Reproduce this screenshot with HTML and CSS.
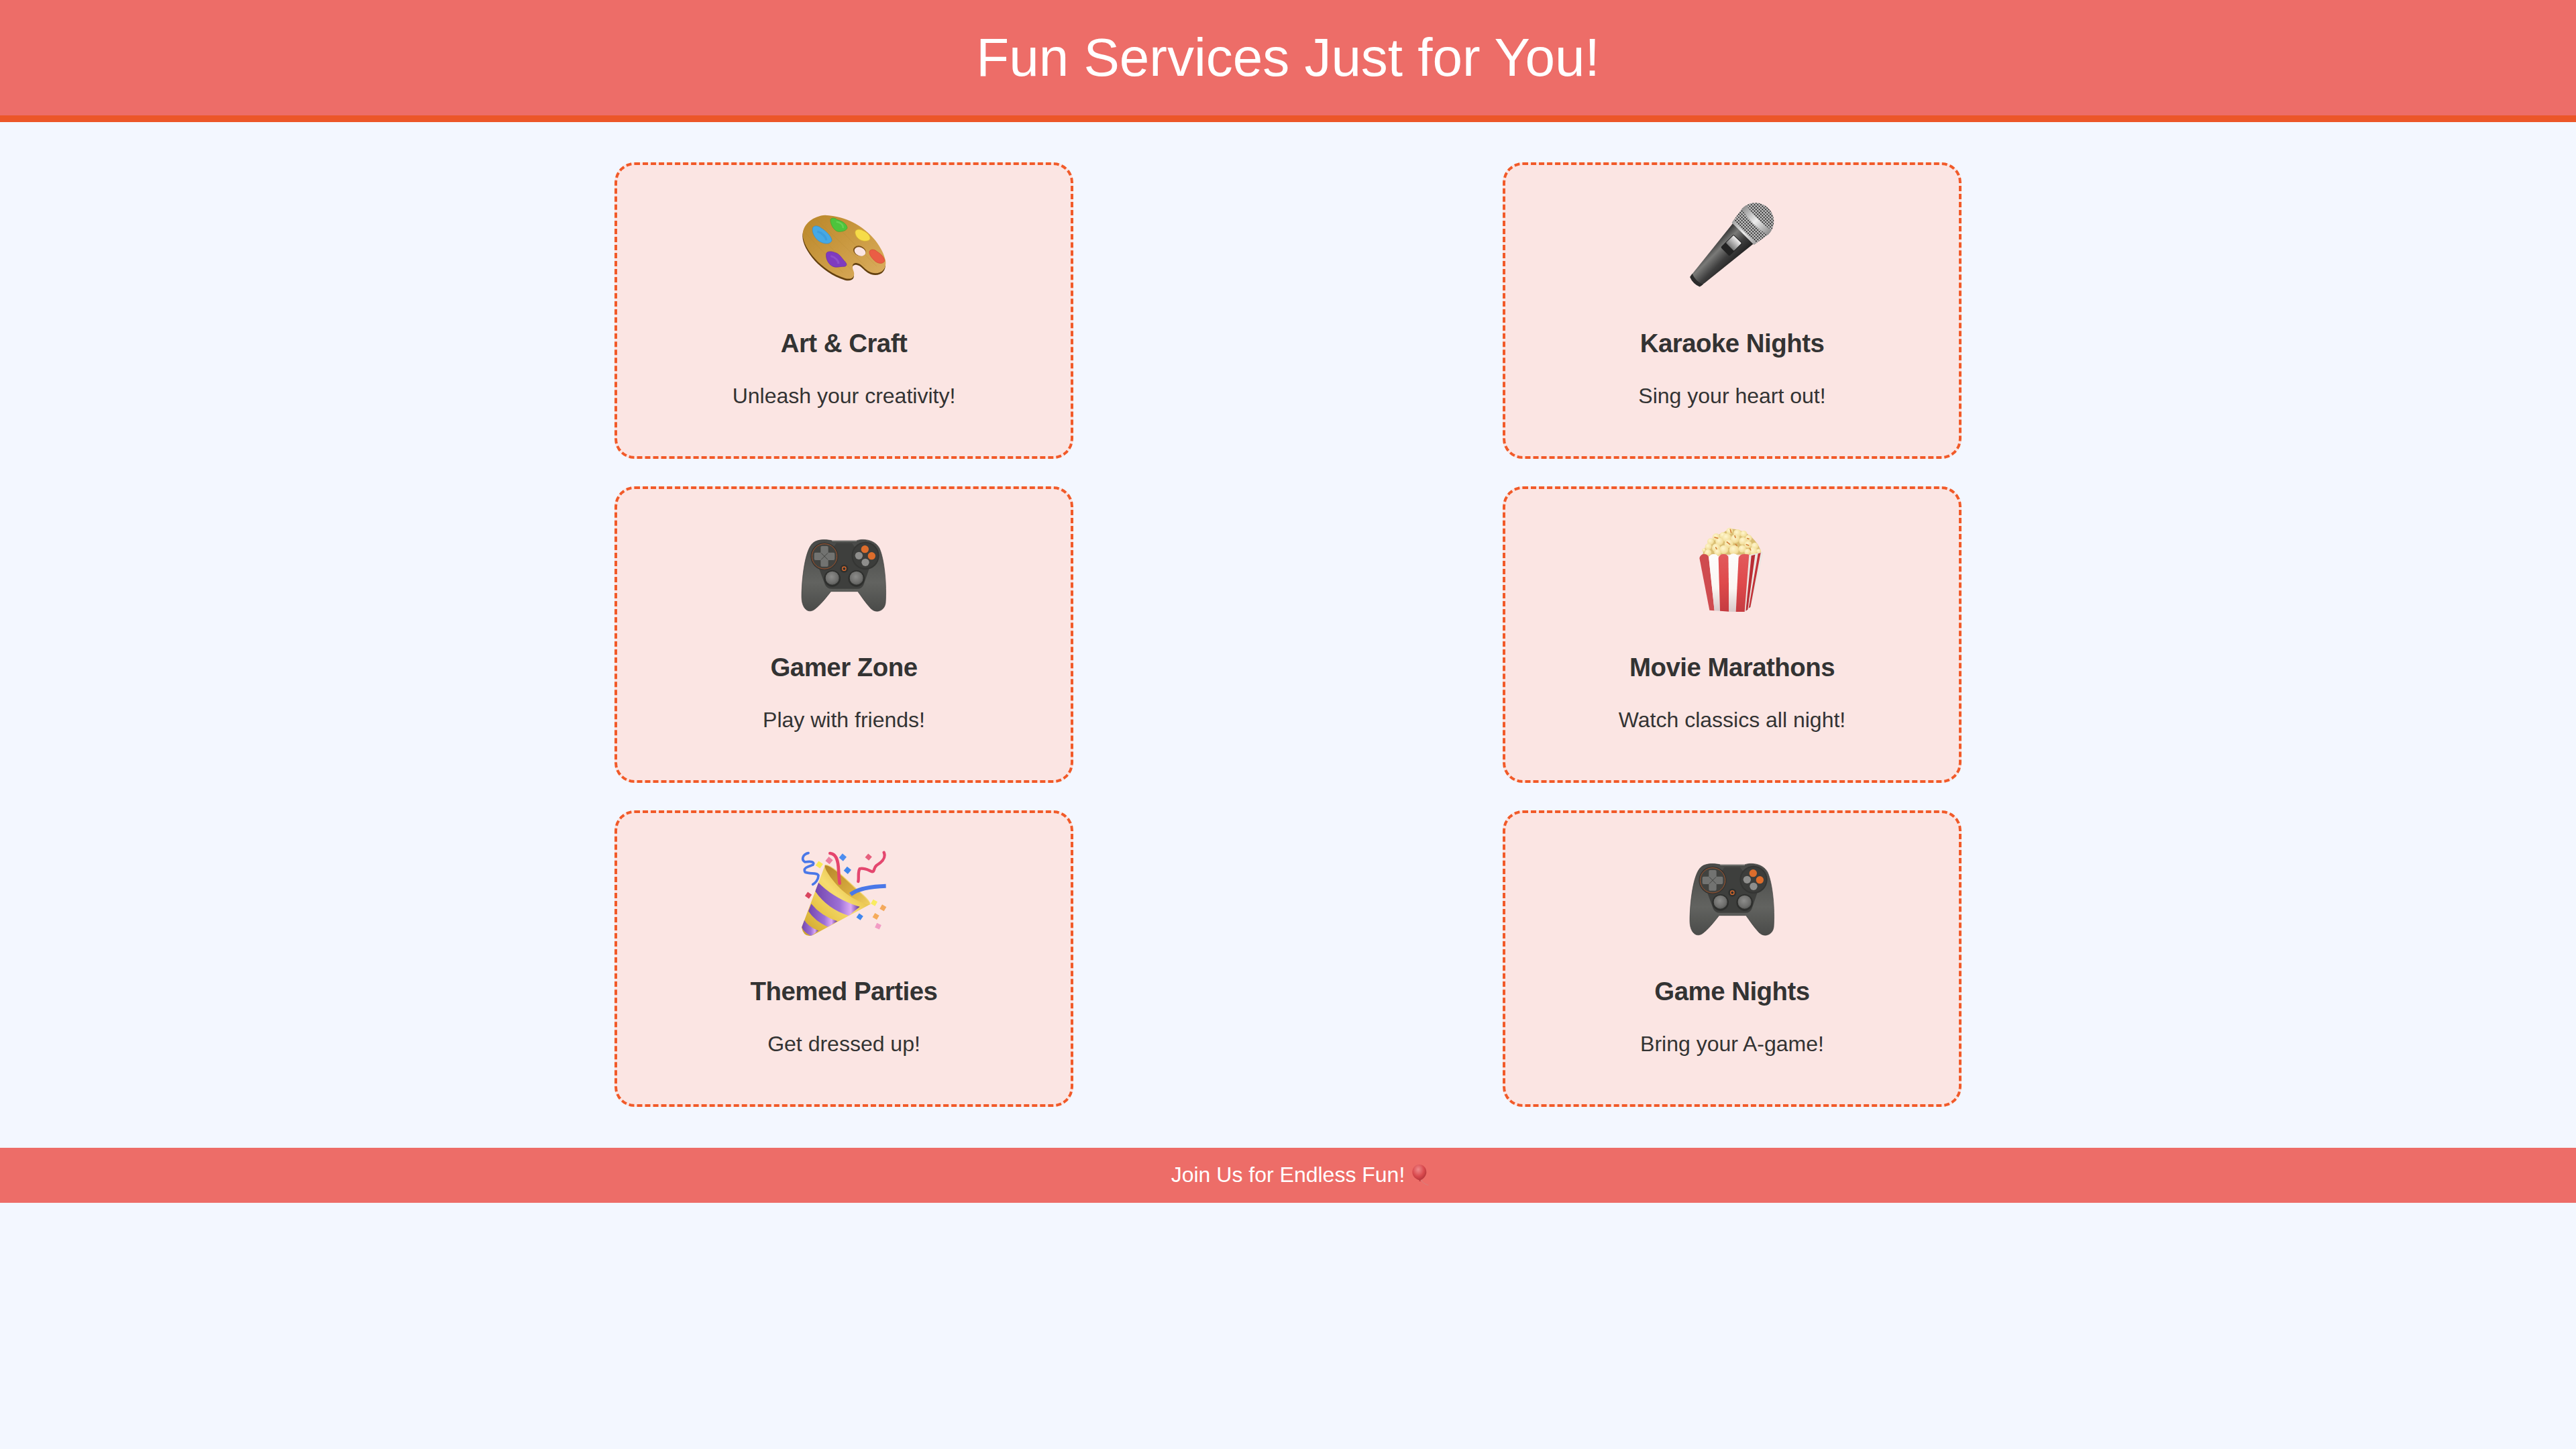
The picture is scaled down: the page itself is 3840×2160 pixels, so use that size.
FILE: index.html
```html
<!DOCTYPE html>
<html lang="en">
<head>
<meta charset="utf-8">
<title>Fun Services Just for You!</title>
<link rel="stylesheet" href="styles.css">
</head>
<body>
<svg class="sprite" aria-hidden="true">
  <defs>
    <linearGradient id="padBody" x1="0" y1="0" x2="0" y2="1">
      <stop offset="0" stop-color="#484947"/><stop offset=".6" stop-color="#626360"/><stop offset="1" stop-color="#4a4b49"/>
    </linearGradient>
    <radialGradient id="padStick" cx=".45" cy=".4" r=".65">
      <stop offset="0" stop-color="#8d8d8b"/><stop offset=".7" stop-color="#6e6e6c"/><stop offset="1" stop-color="#555654"/>
    </radialGradient>
    <symbol id="pad" viewBox="132 30 384 384">
      <path d="M186 103C208 84 250 88 272 93L380 93C405 83 460 86 482 125C506 175 516 295 510 372C505 408 468 420 444 396C420 370 402 342 386 320L266 320C246 346 216 384 190 402C160 420 134 392 135 340C136 260 150 132 186 103Z" fill="url(#padBody)" stroke="#3d3e3c" stroke-width="2"/>
      <path d="M272 95L380 95" stroke="#8f908d" stroke-width="3" stroke-linecap="round" fill="none"/>
      <path d="M212 215L290 104L360 104L438 215L412 290Q404 308 385 308L270 308Q248 308 240 290Z" fill="#3e3f3d"/>
      <circle cx="237" cy="163" r="62" fill="#343533"/>
      <circle cx="237" cy="163" r="56" fill="#41423f" stroke="#b4592b" stroke-width="2.5"/>
      <path d="M220 123Q220 117 226 117L248 117Q254 117 254 123L254 146L277 146Q283 146 283 152L283 174Q283 180 277 180L254 180L254 203Q254 209 248 209L226 209Q220 209 220 203L220 180L197 180Q191 180 191 174L191 152Q191 146 197 146L220 146Z" fill="#727371"/>
      <path d="M222 148L252 178M252 148L222 178" stroke="#3a3b39" stroke-width="2.5"/>
      <circle cx="420" cy="160" r="62" fill="#343533"/>
      <circle cx="420" cy="160" r="56" fill="#3c3d3b"/>
      <circle cx="418" cy="131" r="17" fill="#dd6d2c"/>
      <circle cx="448" cy="161" r="17" fill="#dd6d2c"/>
      <circle cx="391" cy="160" r="17" fill="#8e8e8c"/>
      <circle cx="420" cy="190" r="17" fill="#8e8e8c"/>
      <circle cx="325" cy="218" r="18" fill="#2f302e"/>
      <circle cx="325" cy="218" r="8" fill="none" stroke="#d9682b" stroke-width="4"/>
      <circle cx="272" cy="262" r="37" fill="#2e2f2d"/>
      <circle cx="272" cy="260" r="30" fill="url(#padStick)"/>
      <circle cx="380" cy="262" r="37" fill="#2e2f2d"/>
      <circle cx="380" cy="260" r="30" fill="url(#padStick)"/>
    </symbol>
  </defs>
</svg>

<header class="site-header">
  <h1 class="site-title">Fun Services Just for You!</h1>
</header>

<main class="services">
  <article class="card">
    <svg class="icon" viewBox="132 36 384 384" role="img" aria-label="Artist palette">
      <defs>
        <linearGradient id="wood" x1="0" y1="0" x2="1" y2="1">
          <stop offset="0" stop-color="#b98629"/><stop offset=".45" stop-color="#c9983f"/><stop offset="1" stop-color="#dcae60"/>
        </linearGradient>
        <path id="paletteShape" d="M240 92C190 95 140 130 140 180C142 240 220 340 330 375C360 382 375 368 368 345C360 325 358 306 380 306C410 310 420 350 465 352C500 352 515 325 510 295C495 220 400 100 240 92Z"/>
      </defs>
      <use href="#paletteShape" fill="#63400f" transform="translate(-1 8)"/>
      <use href="#paletteShape" fill="url(#wood)"/>
      <g fill="none" stroke="#a87a28" stroke-width="1.5" opacity=".35">
        <path d="M170 130L360 340M200 110L420 320M255 105L470 320M150 170L320 350"/>
      </g>
      <ellipse cx="394" cy="252" rx="29" ry="22" transform="rotate(22 394 252)" fill="#7a5019"/>
      <ellipse cx="396" cy="255" rx="26" ry="19" transform="rotate(22 396 255)" fill="#fbe5e3"/>
      <path d="M264 112C268 102 286 104 292 112C305 116 335 125 339 148C338 162 312 168 296 165C278 160 262 130 264 112Z" fill="#4dc43c" stroke="#38a52c" stroke-width="2"/>
      <path d="M290 122C308 124 322 135 320 150" stroke="#7fe06c" stroke-width="7" fill="none" opacity=".5"/>
      <path d="M184 150C190 135 212 140 222 150C240 160 268 185 270 205C265 222 240 222 224 214C200 205 180 175 184 150Z" fill="#46a9e4" stroke="#2f8bd0" stroke-width="2"/>
      <path d="M205 165C225 170 245 190 245 205" stroke="#2f87cf" stroke-width="10" fill="none" opacity=".35"/>
      <path d="M375 165C380 152 400 155 410 162C425 168 442 182 441 198C436 210 415 210 400 204C385 198 372 180 375 165Z" fill="#f6dc49" stroke="#d8b72f" stroke-width="2"/>
      <path d="M438 255C444 242 462 245 472 255C490 265 508 285 506 298C500 310 480 310 466 300C452 288 436 270 438 255Z" fill="#ea5d45" stroke="#d2452f" stroke-width="2"/>
      <path d="M246 262C252 252 272 254 284 260C300 262 312 280 325 296C338 308 340 320 325 322C310 320 290 330 272 320C255 312 240 285 246 262Z" fill="#7f3bc0" stroke="#6628a5" stroke-width="2"/>
      <path d="M265 275C285 280 300 295 300 310" stroke="#a068d8" stroke-width="9" fill="none" opacity=".45"/>
    </svg>
    <h3 class="card-title">Art &amp; Craft</h3>
    <p class="card-text">Unleash your creativity!</p>
  </article>

  <article class="card">
    <svg class="icon" viewBox="84 51 384 384" role="img" aria-label="Microphone">
      <defs>
        <linearGradient id="micBody" x1="0" y1="0" x2="1" y2="0">
          <stop offset="0" stop-color="#333"/><stop offset=".3" stop-color="#7a7a78"/><stop offset=".65" stop-color="#3e3e3e"/><stop offset="1" stop-color="#222"/>
        </linearGradient>
        <linearGradient id="micSilver" x1="0" y1="0" x2="1" y2="0">
          <stop offset="0" stop-color="#8d8d8d"/><stop offset=".5" stop-color="#ededed"/><stop offset="1" stop-color="#8a8a8a"/>
        </linearGradient>
        <linearGradient id="micSlide" x1="0" y1="0" x2="0" y2="1">
          <stop offset="0" stop-color="#f0eeee"/><stop offset="1" stop-color="#777"/>
        </linearGradient>
        <pattern id="grille" width="10" height="10" patternUnits="userSpaceOnUse">
          <rect width="10" height="10" fill="#c9c9c9"/><rect x="2" y="2" width="6" height="6" rx="1" fill="#232323"/>
        </pattern>
        <clipPath id="micHead"><path d="M297 135A83 83 0 0 1 463 135L450 214L310 214Z"/></clipPath>
      </defs>
      <g transform="rotate(45 380 135)">
        <path d="M315 210L348 512Q380 526 412 512L445 210Z" fill="url(#micBody)"/>
        <path d="M346 500L349 518Q380 530 411 518L414 500Q380 514 346 500Z" fill="#2b2b2b"/>
        <rect x="352" y="245" width="56" height="82" rx="6" fill="#232323"/>
        <rect x="355" y="248" width="50" height="48" rx="3" fill="url(#micSlide)"/>
        <g clip-path="url(#micHead)">
          <rect x="290" y="45" width="180" height="180" fill="url(#grille)"/>
          <path d="M295 112Q380 128 465 112L465 140Q380 156 295 140Z" fill="url(#micSilver)"/>
          <path d="M290 196Q380 210 470 196L470 225L290 225Z" fill="url(#micSilver)"/>
        </g>
      </g>
    </svg>
    <h3 class="card-title">Karaoke Nights</h3>
    <p class="card-text">Sing your heart out!</p>
  </article>

  <article class="card">
    <svg class="icon" role="img" aria-label="Game controller"><use href="#pad"/></svg>
    <h3 class="card-title">Gamer Zone</h3>
    <p class="card-text">Play with friends!</p>
  </article>

  <article class="card">
    <svg class="icon" viewBox="84 45 384 384" role="img" aria-label="Popcorn">
      <defs>
        <radialGradient id="kernel" cx=".4" cy=".35" r=".7">
          <stop offset="0" stop-color="#fff6cf"/><stop offset=".75" stop-color="#f3df9d"/><stop offset="1" stop-color="#e0c47a"/>
        </radialGradient>
        <linearGradient id="boxRed" x1="0" y1="0" x2="0" y2="1">
          <stop offset="0" stop-color="#e25a5c"/><stop offset=".5" stop-color="#df4a4c"/><stop offset="1" stop-color="#c53b40"/>
        </linearGradient>
        <linearGradient id="boxWhite" x1="0" y1="0" x2="0" y2="1">
          <stop offset="0" stop-color="#fdfdfd"/><stop offset=".6" stop-color="#fbf6f2"/><stop offset="1" stop-color="#d9c9c9"/>
        </linearGradient>
      </defs>
      <path d="M145 170C150 130 190 90 240 70C270 45 300 55 340 75C380 100 405 140 408 170Z" fill="#d9bd72"/>
      <g fill="url(#kernel)">
        <circle cx="265" cy="65" r="15"/><circle cx="300" cy="75" r="18"/><circle cx="328" cy="78" r="15"/>
        <circle cx="235" cy="85" r="15"/><circle cx="205" cy="92" r="17"/><circle cx="350" cy="97" r="15"/>
        <circle cx="252" cy="95" r="20"/><circle cx="290" cy="100" r="20"/><circle cx="180" cy="112" r="15"/>
        <circle cx="325" cy="110" r="18"/><circle cx="220" cy="112" r="18"/><circle cx="262" cy="122" r="20"/>
        <circle cx="348" cy="125" r="17"/><circle cx="378" cy="132" r="16"/><circle cx="170" cy="135" r="15"/>
        <circle cx="205" cy="140" r="19"/><circle cx="240" cy="148" r="20"/><circle cx="285" cy="150" r="22"/>
        <circle cx="322" cy="145" r="17"/><circle cx="370" cy="155" r="19"/><circle cx="345" cy="158" r="14"/>
        <circle cx="168" cy="162" r="16"/><circle cx="212" cy="160" r="16"/><circle cx="395" cy="155" r="10"/><circle cx="150" cy="150" r="8"/>
      </g>
      <g fill="none" stroke="#d3843a" stroke-width="5" stroke-linecap="round">
        <path d="M268 58L272 72M198 93L212 97M288 86L291 94M253 114L266 124M203 138L207 145M292 124L297 130M344 98L351 100M340 125L350 129M356 143L359 150"/>
      </g>
      <path d="M352 172L415 158L360 410L332 426Z" fill="#ece6e2"/>
      <path d="M362 175L379 170L346 416L337 422Z" fill="#b92e35"/>
      <path d="M392 166L404 162L358 405L350 410Z" fill="#c23238"/>
      <path d="M130 185Q136 168 150 168Q170 168 172 185L197 421L175 419Z" fill="#cf4b4f"/>
      <path d="M172 185Q176 168 194 168Q213 168 215 185L222 422L197 421Z" fill="url(#boxWhite)"/>
      <path d="M215 185Q220 168 238 168Q258 168 260 185L262 425L222 422Z" fill="url(#boxRed)"/>
      <path d="M260 185Q264 166 283 166Q303 168 305 185L293 426L262 425Z" fill="url(#boxWhite)"/>
      <path d="M305 185Q310 168 330 168Q350 168 352 172L332 426L293 426Z" fill="url(#boxRed)"/>
    </svg>
    <h3 class="card-title">Movie Marathons</h3>
    <p class="card-text">Watch classics all night!</p>
  </article>

  <article class="card">
    <svg class="icon" viewBox="132 54 384 384" role="img" aria-label="Party popper">
      <defs>
        <linearGradient id="gold" x1="0" y1="1" x2="1" y2="0">
          <stop offset="0" stop-color="#c99f2c"/><stop offset=".3" stop-color="#e8c548"/><stop offset=".55" stop-color="#f6dc70"/><stop offset=".8" stop-color="#e3b93c"/><stop offset="1" stop-color="#c49425"/>
        </linearGradient>
        <linearGradient id="goldIn" x1="0" y1="0" x2="1" y2="1">
          <stop offset="0" stop-color="#b5842a"/><stop offset=".6" stop-color="#d8ab3e"/><stop offset="1" stop-color="#f0d060"/>
        </linearGradient>
        <linearGradient id="stripe" x1="0" y1="0" x2="1" y2="0">
          <stop offset="0" stop-color="#7346ad"/><stop offset=".55" stop-color="#9d70d6"/><stop offset=".8" stop-color="#deabf5"/><stop offset="1" stop-color="#5e3490"/>
        </linearGradient>
        <clipPath id="coneClip"><path d="M240 118L135 398Q145 445 185 432L440 295Z"/></clipPath>
      </defs>
      <path d="M165 65C140 70 132 95 150 105C180 100 195 105 185 118C165 125 140 130 150 150C170 160 205 150 210 165C210 185 195 200 185 205" fill="none" stroke="#4a78e8" stroke-width="11" stroke-linecap="round"/>
      <path d="M240 118L135 398Q145 445 185 432L440 295Z" fill="url(#gold)"/>
      <g clip-path="url(#coneClip)">
        <path d="M208 195Q280 270 395 305L345 345Q250 315 195 235Z" fill="url(#stripe)"/>
        <path d="M178 292Q220 345 295 370L252 395Q195 370 165 325Z" fill="url(#stripe)"/>
        <path d="M145 362Q165 395 210 412L178 436Q145 420 135 395Z" fill="url(#stripe)"/>
      </g>
      <path d="M240 118C270 115 340 190 385 230C420 260 445 285 440 295C420 300 340 260 300 215C265 178 232 130 240 118Z" fill="url(#goldIn)"/>
      <path d="M240 118C270 115 340 190 385 230C420 260 445 285 440 295" fill="none" stroke="#f3d770" stroke-width="4"/>
      <path d="M262 66C285 68 296 92 299 125C301 155 302 180 305 200" fill="none" stroke="#e5456c" stroke-width="14" stroke-linecap="round"/>
      <path d="M354 250C385 225 440 214 512 212" fill="none" stroke="#4a78e8" stroke-width="18"/>
      <path d="M503 62C512 85 500 102 470 120C455 132 462 150 450 148C430 140 415 130 395 135C385 150 392 175 388 192" fill="none" stroke="#e4476f" stroke-width="13" stroke-linecap="round"/>
      <g>
        <rect x="202" y="105" width="24" height="24" transform="rotate(35 214 117)" fill="#f9ea55"/>
        <rect x="246" y="86" width="24" height="24" transform="rotate(40 258 98)" fill="#ec7fa0"/>
        <rect x="307" y="72" width="24" height="24" transform="rotate(40 319 84)" fill="#4d8df0"/>
        <rect x="328" y="130" width="24" height="24" transform="rotate(40 340 142)" fill="#3f86ee"/>
        <rect x="423" y="72" width="22" height="22" transform="rotate(40 434 83)" fill="#e6607e"/>
        <rect x="154" y="243" width="22" height="22" transform="rotate(35 165 254)" fill="#d9455f"/>
        <rect x="448" y="276" width="22" height="22" transform="rotate(30 459 287)" fill="#f9ec60"/>
        <rect x="488" y="299" width="22" height="22" transform="rotate(30 499 310)" fill="#f4a95c"/>
        <rect x="456" y="337" width="22" height="22" transform="rotate(30 467 348)" fill="#f5ab5a"/>
        <rect x="384" y="339" width="22" height="22" transform="rotate(35 395 350)" fill="#3f86ee"/>
        <rect x="466" y="381" width="22" height="22" transform="rotate(25 477 392)" fill="#f29cc4"/>
      </g>
    </svg>
    <h3 class="card-title">Themed Parties</h3>
    <p class="card-text">Get dressed up!</p>
  </article>

  <article class="card">
    <svg class="icon" role="img" aria-label="Game controller"><use href="#pad"/></svg>
    <h3 class="card-title">Game Nights</h3>
    <p class="card-text">Bring your A-game!</p>
  </article>
</main>

<footer class="site-footer">
  <span class="footer-text">Join Us for Endless Fun!
    <svg class="balloon" viewBox="1209 135 96 96" role="img" aria-label="Balloon">
      <defs>
        <radialGradient id="balloonFill" cx=".42" cy=".3" r=".75">
          <stop offset="0" stop-color="#f08a8c"/><stop offset=".55" stop-color="#d94a4e"/><stop offset="1" stop-color="#a82e34"/>
        </radialGradient>
      </defs>
      <path d="M1255 206Q1262 222 1290 232" fill="none" stroke="#c98b8b" stroke-width="2"/>
      <path d="M1247 138C1265 138 1279 152 1279 172C1279 190 1262 206 1251 208L1255 212L1246 212L1248 208C1232 205 1216 190 1216 172C1216 152 1230 138 1247 138Z" fill="url(#balloonFill)"/>
    </svg>
  </span>
</footer>
</body>
</html>
```

FILE: styles.css
```css
* { box-sizing: border-box; }

body {
  margin: 0;
  min-height: 2160px;
  background: #f3f7ff;
  color: #333;
  font-family: "Liberation Sans", Arial, sans-serif;
}

.sprite {
  display: block;
  width: 0;
  height: 0;
}

.site-header {
  padding: 40px 0;
  background: #ed6d68;
  border-bottom: 10px solid #ec5628;
  text-align: center;
}

.site-title {
  margin: 0;
  color: #fff;
  font-size: 80px;
  font-weight: 400;
  line-height: 92px;
}

.services {
  display: grid;
  grid-template-columns: 684px 684px;
  justify-content: center;
  column-gap: 640px;
  row-gap: 41px;
  padding: 60px 0 61px;
}

.card {
  height: 442px;
  padding: 56px 0 0;
  background: #fbe5e3;
  border: 4px dashed #f15a29;
  border-radius: 30px;
  text-align: center;
}

.icon {
  display: block;
  width: 128px;
  height: 128px;
  margin: 0 auto 60px;
}

.card-title {
  margin: 0 0 38px;
  font-size: 38.4px;
  font-weight: 700;
  line-height: 44px;
  letter-spacing: -0.5px;
}

.card-text {
  margin: 0;
  font-size: 32px;
  line-height: 37px;
}

.site-footer {
  padding: 22px 0 23px;
  background: #ed6d68;
  color: #fff;
  font-size: 32px;
  line-height: 37px;
  text-align: center;
}

.footer-text {
  position: relative;
  display: inline-block;
}

.balloon {
  position: absolute;
  left: calc(100% + 9px);
  top: 2px;
  width: 32px;
  height: 32px;
}
```
